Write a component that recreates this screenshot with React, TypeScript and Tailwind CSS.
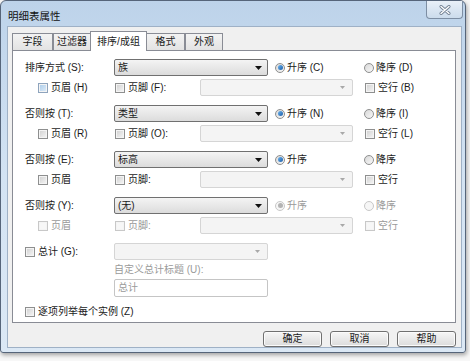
import React from "react";

const font = "font-['Liberation_Sans','Noto_Sans_CJK_SC',sans-serif]";

function Combo({ text, width }: { text: string; width: string }) {
  return (
    <div
      className={`${width} h-[17px] flex items-center justify-between rounded-[2px] border border-[#707070] bg-gradient-to-b from-[#f4f4f4] to-[#dcdcdc] pl-[3px] pr-[5px]`}
    >
      <span className="leading-none">{text}</span>
      <svg width="7" height="4" viewBox="0 0 7 4">
        <path d="M0 0 H7 L3.5 4 Z" fill="#111" />
      </svg>
    </div>
  );
}

function DisabledCombo({ width }: { width: string }) {
  return (
    <div
      className={`${width} h-[17px] flex items-center justify-end rounded-[2px] border border-[#d5d5d5] bg-[#f4f4f4] pr-[7px]`}
    >
      <svg width="5" height="3" viewBox="0 0 5 3">
        <path d="M0 0 H5 L2.5 3 Z" fill="#a8a8a8" />
      </svg>
    </div>
  );
}

function Check({
  label,
  width = "",
  disabled = false,
  hot = false,
}: {
  label: string;
  width?: string;
  disabled?: boolean;
  hot?: boolean;
}) {
  const box = disabled
    ? "border-[#c8c8c8] bg-[#f7f7f7]"
    : hot
    ? "border-[#8ea4bd] bg-gradient-to-br from-[#a9cbe9] to-[#e2eef9]"
    : "border-[#8e8f8f] bg-gradient-to-br from-[#cfcfcf] to-[#f7f7f7]";
  return (
    <div className={`${width} flex items-center gap-[3px] shrink-0`}>
      <span className={`w-[10px] h-[10px] border ${box} shadow-[inset_0_0_0_1px_#f4f4f4]`} />
      <span className={`leading-none ${disabled ? "text-[#9a9a9a]" : ""}`}>{label}</span>
    </div>
  );
}

function Radio({
  label,
  checked = false,
  disabled = false,
  width = "",
}: {
  label: string;
  checked?: boolean;
  disabled?: boolean;
  width?: string;
}) {
  return (
    <div className={`${width} flex items-center gap-[2px] shrink-0`}>
      <span
        className={`w-[10px] h-[10px] rounded-full border flex items-center justify-center ${
          disabled ? "border-[#c8c8c8] bg-[#f6f6f6]" : "border-[#8e8f8f] bg-gradient-to-br from-[#d8d8d8] to-[#f8f8f8]"
        }`}
      >
        {checked && (
          <span
            className={`w-[5px] h-[5px] rounded-full ${
              disabled ? "bg-[#b3b3b3]" : "bg-gradient-to-br from-[#6ab4f0] to-[#1d5ea8]"
            }`}
          />
        )}
      </span>
      <span className={`leading-none ${disabled ? "text-[#9a9a9a]" : ""}`}>{label}</span>
    </div>
  );
}

type Group = {
  label: string;
  value: string;
  asc: string;
  desc: string;
  header: string;
  footer: string;
  blank: string;
  hot?: boolean;
  disabled?: boolean;
};

const groups: Group[] = [
  { label: "排序方式 (S):", value: "族", asc: "升序 (C)", desc: "降序 (D)", header: "页眉 (H)", footer: "页脚 (F):", blank: "空行 (B)", hot: true },
  { label: "否则按 (T):", value: "类型", asc: "升序 (N)", desc: "降序 (I)", header: "页眉 (R)", footer: "页脚 (O):", blank: "空行 (L)" },
  { label: "否则按 (E):", value: "标高", asc: "升序", desc: "降序", header: "页眉", footer: "页脚:", blank: "空行" },
  { label: "否则按 (Y):", value: "(无)", asc: "升序", desc: "降序", header: "页眉", footer: "页脚:", blank: "空行", disabled: true },
];

function SortGroup({ g }: { g: Group }) {
  return (
    <div className="flex flex-col">
      <div className="flex items-center h-[17px]">
        <span className="w-[89px] leading-none shrink-0">{g.label}</span>
        <Combo text={g.value} width="w-[154px]" />
        <Radio label={g.asc} checked disabled={g.disabled} width="w-[89px] ml-[7px]" />
        <Radio label={g.desc} disabled={g.disabled} />
      </div>
      <div className="flex items-center h-[17px] mt-[3px]">
        <Check label={g.header} hot={g.hot} disabled={g.disabled} width="w-[77px] ml-[13px]" />
        <Check label={g.footer} disabled={g.disabled} width="w-[85px]" />
        <DisabledCombo width="w-[153px]" />
        <Check label={g.blank} disabled={g.disabled} width="ml-[12px]" />
      </div>
    </div>
  );
}

const tabs = ["字段", "过滤器", "排序/成组", "格式", "外观"];
const tabWidths = ["w-[41px]", "w-[37px]", "w-[57px]", "w-[38px]", "w-[38px]"];

function Button({ label }: { label: string }) {
  return (
    <button className="w-[59px] h-[16px] rounded-[3px] border border-[#707070] bg-gradient-to-b from-[#f6f6f6] to-[#dcdcdc] shadow-[inset_0_0_0_1px_#fbfbfb] leading-none text-[10px]">
      {label}
    </button>
  );
}

export default function App() {
  return (
    <div className={`w-[470px] h-[361px] bg-[#f7f7f7] overflow-hidden text-[10px] text-[#1a1a1a] ${font}`}>
      <div className="w-[466px] h-[353px] rounded-t-[6px] rounded-b-[3px] border border-[#56657a] bg-gradient-to-b from-[#bdd3ea] via-[#d3e3f3] to-[#dbe8f5] shadow-[1px_2px_4px_rgba(0,0,0,0.35)] flex flex-col">
        {/* title bar */}
        <div className="h-[26px] flex justify-between pl-[7px] pr-[2px]">
          <span className="mt-[10px] leading-none text-[10.5px] text-[#111]">明细表属性</span>
          <div className="w-[37px] h-[18px] rounded-b-[4px] border border-t-0 border-[#7d8ea3] bg-gradient-to-b from-[#e9f0f8] to-[#ccdcec] flex items-center justify-center">
            <svg width="12" height="10" viewBox="0 0 12 10">
              <path d="M2 1.5 L10 8.5 M10 1.5 L2 8.5" stroke="#6f7e90" strokeWidth="3" strokeLinecap="round" />
              <path d="M2 1.5 L10 8.5 M10 1.5 L2 8.5" stroke="#ffffff" strokeWidth="1.4" strokeLinecap="round" />
            </svg>
          </div>
        </div>

        {/* client area */}
        <div className="flex-1 ml-[6px] mr-[3px] mb-[4px] border border-[#9fb1c6] bg-[#f0f0f0] pl-[4px] pr-[5px] pt-[4px] flex flex-col">
          <div className="flex items-end h-[19px] relative z-10">
            {tabs.map((t, i) =>
              i === 2 ? (
                <div
                  key={t}
                  className={`${tabWidths[i]} h-[20px] -mb-[1px] border border-b-0 border-[#898c95] bg-white flex items-center justify-center leading-none`}
                >
                  {t}
                </div>
              ) : (
                <div
                  key={t}
                  className={`${tabWidths[i]} h-[17px] border border-b-0 ${i === 3 ? "border-l-0" : ""} ${
                    i === 1 ? "border-r-0" : ""
                  } border-[#898c95] bg-gradient-to-b from-[#f3f3f3] to-[#e3e3e3] flex items-center justify-center leading-none`}
                >
                  {t}
                </div>
              )
            )}
          </div>
          <div className="h-[273px] border border-[#898c95] bg-white pt-[8px] pl-[12px] flex flex-col">
            <div className="flex flex-col gap-[9px]">
              {groups.map((g) => (
                <SortGroup key={g.label} g={g} />
              ))}
            </div>
            <div className="flex items-center h-[17px] mt-[9px]">
              <Check label="总计 (G):" width="w-[89px]" />
              <DisabledCombo width="w-[154px]" />
            </div>
            <div className="ml-[89px] mt-[3px] h-[14px] flex items-center text-[#9a9a9a] leading-none">自定义总计标题 (U):</div>
            <div className="ml-[89px] mt-[2px] w-[154px] h-[18px] border border-[#c5c5c5] rounded-[2px] bg-white flex items-center pl-[3px] text-[#9a9a9a] leading-none">
              总计
            </div>
            <div className="mt-[8px] h-[14px] flex items-center">
              <Check label="逐项列举每个实例 (Z)" />
            </div>
          </div>
          <div className="flex justify-end gap-[8px] mt-[8px]">
            <Button label="确定" />
            <Button label="取消" />
            <Button label="帮助" />
          </div>
        </div>
      </div>
    </div>
  );
}
